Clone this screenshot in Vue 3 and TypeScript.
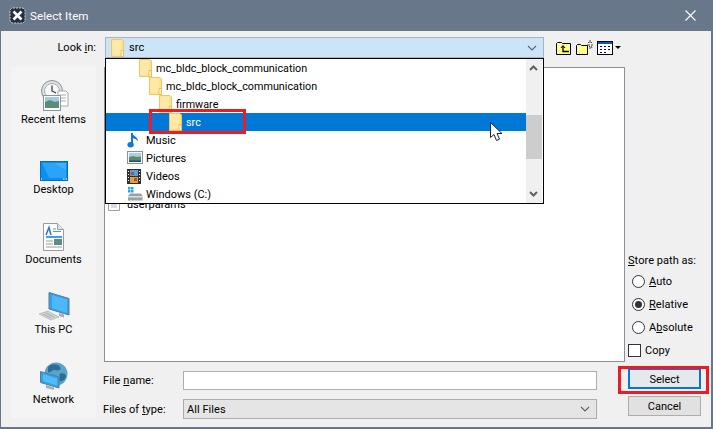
<script setup lang="ts">
interface Row { label: string; indent: number; kind: string; selected?: boolean }
const rows: Row[] = [
  { label: 'mc_bldc_block_communication', indent: 33, kind: 'folder' },
  { label: 'mc_bldc_block_communication', indent: 43, kind: 'folder' },
  { label: 'firmware', indent: 53, kind: 'folder' },
  { label: 'src', indent: 63, kind: 'folder', selected: true },
  { label: 'Music', indent: 21, kind: 'music' },
  { label: 'Pictures', indent: 21, kind: 'pictures' },
  { label: 'Videos', indent: 21, kind: 'videos' },
  { label: 'Windows (C:)', indent: 21, kind: 'drive' },
]
</script>

<template>
  <div class="window">
    <svg class="defs" width="0" height="0" aria-hidden="true">
      <symbol id="folder" viewBox="0 0 13 18">
        <path d="M.5.5h10.500l1.500 1.500v15.500H.5z" fill="#ffe38c" stroke="#ecc86a" />
        <path d="M1.500 1.500h8.500v14h-8.500z" fill="#ffe9a6" />
        <path d="M10 11.500h2.500v6H10z" fill="#fff4cc" stroke="#e0b850" stroke-width=".8" />
      </symbol>
    </svg>

    <header class="titlebar">
      <svg class="logo" width="17" height="17" viewBox="0 0 17 17">
        <rect x="1" y="1" width="15" height="15" rx="3" fill="#26303c" stroke="#c8ced6" stroke-dasharray="2 1" />
        <path d="M4.500 4.500l8 8m0-8l-8 8" stroke="#fff" stroke-width="2.600" />
      </svg>
      <span class="title">Select Item</span>
      <svg class="close" width="11" height="11" viewBox="0 0 11 11">
        <path d="M.5.500l10 10m0-10l-10 10" stroke="#fff" stroke-width="1.100" />
      </svg>
    </header>

    <div class="content">
      <div class="toprow">
        <label class="lookin">Look <u>i</u>n:</label>
        <div class="combo">
          <svg class="ficon" width="13" height="18"><use href="#folder" /></svg>
          <span class="combo-text">src</span>
          <svg class="chev" width="10" height="6" viewBox="0 0 10 6"><path d="M1 1l4 4 4-4" fill="none" stroke="#5a6572" stroke-width="1.100" /></svg>

          <div class="dropdown">
            <div class="dd-list">
              <div v-for="(r, i) in rows" :key="i" class="dd-row" :class="{ selected: r.selected }" :style="{ paddingLeft: r.indent + 'px' }">
                <svg v-if="r.kind === 'folder'" class="ficon" width="13" height="18"><use href="#folder" /></svg>
                <span v-else class="slot">
                  <svg v-if="r.kind === 'music'" width="14" height="16" viewBox="0 0 14 16">
                    <path d="M5 1v11.500" stroke="#0f78d4" stroke-width="2" />
                    <ellipse cx="3.600" cy="12.800" rx="3.200" ry="2.700" fill="#0f78d4" />
                    <path d="M5 1c1 3 6 3.500 6 8.500-1.500-2.500-3.500-3-6-3.500z" fill="#0f78d4" />
                  </svg>
                  <svg v-else-if="r.kind === 'pictures'" width="16" height="14" viewBox="0 0 16 14">
                    <rect x=".5" y=".5" width="15" height="12" fill="#f4f6f7" stroke="#8b9399" />
                    <rect x="2" y="2" width="12" height="4.500" fill="#a9d0e4" />
                    <path d="M2 6l4-1 4 1 4-.5V11H2z" fill="#5f8a6e" />
                    <path d="M2 9.500h12V11H2z" fill="#2f4f55" />
                  </svg>
                  <svg v-else-if="r.kind === 'videos'" width="14" height="15" viewBox="0 0 14 15">
                    <rect x="0" y="0" width="14" height="15" fill="#2c2f33" />
                    <rect x="3" y="1" width="8" height="6" fill="#5aa0d8" />
                    <rect x="3" y="8" width="8" height="6" fill="#d9a53c" />
                    <path d="M4 3h3v3H4zM7 9h3v3H7z" fill="#b34a3a" />
                    <path d="M1 2h1v1H1zm0 3h1v1H1zm0 3h1v1H1zm0 3h1v1H1zm11-9h1v1h-1zm0 3h1v1h-1zm0 3h1v1h-1zm0 3h1v1h-1z" fill="#fff" />
                  </svg>
                  <svg v-else width="16" height="15" viewBox="0 0 16 15">
                    <path d="M1 0h2.500v2.500H1zM4 0h2.500v2.500H4zM1 3h2.500v2.500H1zM4 3h2.500v2.500H4z" fill="#1ea7f0" />
                    <path d="M1 9l2-2.500h11L15.500 9v4.500H1z" fill="#9aa0a6" />
                    <path d="M1 9h14.500v1.500H1z" fill="#dcdfe1" />
                    <rect x="12" y="11.500" width="2" height="1.200" fill="#57d05a" />
                  </svg>
                </span>
                <span class="dd-label" :class="{ near: r.kind !== 'folder' }">{{ r.label }}</span>
              </div>
            </div>
            <div class="dd-scroll">
              <svg width="9" height="6" viewBox="0 0 9 6" class="sa-up"><path d="M1 5l3.500-3.500L8 5" fill="none" stroke="#606060" stroke-width="2" /></svg>
              <div class="dd-thumb"></div>
              <svg width="9" height="6" viewBox="0 0 9 6" class="sa-down"><path d="M1 1l3.500 3.500L8 1" fill="none" stroke="#606060" stroke-width="2" /></svg>
            </div>
          </div>
        </div>

        <div class="tools">
          <svg width="16" height="14" viewBox="0 0 16 14">
            <path d="M.5 13.500V2.500l1-1h4l1 1h8v11z" fill="#ffff8c" stroke="#000" />
            <path d="M5 7l2-2.500L9 7" fill="none" stroke="#000" />
            <path d="M7 5v5.500h6" fill="none" stroke="#000" stroke-width="1.300" />
          </svg>
          <svg width="17" height="15" viewBox="0 0 17 15">
            <path d="M.5 14.500V5.500l1-1h3l1 1h6v9z" fill="#ffff8c" stroke="#000" />
            <path d="M14 0v3M12 2l1 1M16 2l-1 1M11 5h3M15 5h2M13 7l1-1M16 8l-1-2M14 7v2" stroke="#222" stroke-width=".8" />
          </svg>
          <svg width="16" height="14" viewBox="0 0 16 14">
            <rect x=".5" y=".5" width="15" height="13" fill="#fff" stroke="#000" />
            <rect x="1" y="1" width="14" height="2" fill="#0a5bb0" />
            <path d="M3 5h2v1H3zM7 5h2v1H7zM11 5h2v1h-2zM3 8h2v1H3zM7 8h2v1H7zM11 8h2v1h-2zM3 11h2v1H3zM7 11h2v1H7z" fill="#000088" />
          </svg>
          <svg class="caret" width="6" height="3" viewBox="0 0 6 3"><path d="M0 0h6L3 3z" fill="#000" /></svg>
        </div>
      </div>

      <div class="main">
        <aside class="sidebar">
          <div class="place">
            <svg width="30" height="31" viewBox="0 0 30 31">
              <circle cx="13" cy="11" r="10.500" fill="#dfe2e4" stroke="#8c9094" />
              <circle cx="13" cy="11" r="7.500" fill="#f6f7f7" stroke="#a8acb0" />
              <path d="M13 5.500V11l4 2" fill="none" stroke="#33383c" stroke-width="1.200" />
              <path d="M19 11h8l2 2v13h-10z" fill="#fff" stroke="#a6a8ab" />
              <path d="M21 15h6M21 18h6M21 21h6" stroke="#a8acb0" />
              <rect x="4.500" y="15.500" width="17" height="15" fill="#fff" stroke="#8f9498" />
              <rect x="6" y="17" width="14" height="6" fill="#9fcbe6" />
              <path d="M6 22l5-2 5 2 4-1v7H6z" fill="#5d8c76" />
            </svg>
            <span>Recent Items</span>
          </div>
          <div class="place">
            <svg width="28" height="20" viewBox="0 0 28 20">
              <rect x=".5" y=".5" width="27" height="19" fill="#0a8ef0" stroke="#0a6cb8" />
              <path d="M2 2h24v15H9z" fill="#2aa4f8" />
              <path d="M14 2h12v7z" fill="#3fb2fb" />
              <path d="M1 18h1M23 18h1.500M25.500 18H27" stroke="#fff" />
            </svg>
            <span>Desktop</span>
          </div>
          <div class="place">
            <svg width="21" height="28" viewBox="0 0 21 28">
              <path d="M.5.5h14l6 6v21H.5z" fill="#fff" stroke="#9a9c9e" />
              <path d="M14.500.5v6h6" fill="#e4e5e6" stroke="#9a9c9e" />
              <path d="M3 12L6 4.500 8 12" fill="none" stroke="#2f6fd0" stroke-width="1.500" />
              <path d="M10 6h3M10 8.500h8M3 13.500h16M3 14.500h16" stroke="#37a3df" />
              <path d="M3 18h7M3 21h7M3 24h16" stroke="#9a9c9e" />
              <rect x="11" y="16" width="8" height="6" fill="#5e8a8c" />
            </svg>
            <span>Documents</span>
          </div>
          <div class="place">
            <svg width="32" height="29" viewBox="0 0 32 29">
              <path d="M11 .5L31 6.500V23L11 17z" fill="#2aa4f0" stroke="#62798e" />
              <path d="M14 3l15 4.500V21L14 16z" fill="#4db8f8" />
              <path d="M21 21l5 1.500v3l-5-1.500z" fill="#a8acb0" />
              <path d="M1 22l9-3 11 6-8 3z" fill="#ced0d2" stroke="#a8acb0" stroke-width=".6" />
              <path d="M5 22l8 4M8 21l8 4" stroke="#8e9194" stroke-width=".5" />
            </svg>
            <span>This PC</span>
          </div>
          <div class="place">
            <svg width="28" height="29" viewBox="0 0 28 29">
              <circle cx="16" cy="12" r="11.500" fill="#5ba3c8" />
              <path d="M8 5c4-4 10-3 12 0s-2 4-5 3-4 4-7 2zM19 12c4-2 7 0 7 2s-4 7-6 5 1-5-1-7z" fill="#2a6f99" />
              <path d="M.5 9.500L19 15v11L.5 20.500z" fill="#2aa4f0" stroke="#62798e" />
              <path d="M3 12l14 4.500v7L3 19z" fill="#52bcf8" />
              <path d="M6 23l8 2.500v2.500l-8-2z" fill="#a8acb0" />
            </svg>
            <span>Network</span>
          </div>
        </aside>

        <div class="center">
          <div class="filelist">
            <div class="file">
              <svg width="12" height="14" viewBox="0 0 12 14"><path d="M.5.500h8l3 3v10H.5z" fill="#fff" stroke="#a0a0a0" /><path d="M3 6h6M3 8h6M3 10h6" stroke="#b8b8b8" /></svg>
              <span>userparams</span>
            </div>
          </div>
          <div class="formrow fr1">
            <label>File <u>n</u>ame:</label>
            <div class="input"></div>
          </div>
          <div class="formrow fr2">
            <label>Files of <u>t</u>ype:</label>
            <div class="select">
              <span>All Files</span>
              <svg width="10" height="6" viewBox="0 0 10 6"><path d="M1 1l4 4 4-4" fill="none" stroke="#606060" stroke-width="1.100" /></svg>
            </div>
          </div>
        </div>

        <div class="right">
          <div class="store-label"><u>S</u>tore path as:</div>
          <div class="radio"><i class="circle"></i><span><u>A</u>uto</span></div>
          <div class="radio"><i class="circle on"></i><span><u>R</u>elative</span></div>
          <div class="radio"><i class="circle"></i><span>A<u>b</u>solute</span></div>
          <div class="check"><i class="box"></i><span>Copy</span></div>
          <button class="btn primary">Select</button>
          <button class="btn">Cancel</button>
        </div>
      </div>
    </div>

    <div class="mark mark-src"></div>
    <div class="mark mark-select"></div>
    <svg class="cursor" width="13" height="20" viewBox="0 0 13 20">
      <path d="M.5.500v15l3.500-3 2.500 6 3-1.300-2.500-5.700h5z" fill="#fff" stroke="#1c2430" stroke-width="1" />
    </svg>
  </div>
</template>

<style scoped>
.window {
  position: relative;
  width: 713px;
  height: 429px;
  box-sizing: border-box;
  border: 1px solid #68778a;
  border-width: 0 2px 2px 1px;
  background: #f0f0f0;
  font-family: Roboto, "Noto Sans", sans-serif;
  font-size: 11px;
  letter-spacing: 0.05px;
  color: #000;
  overflow: hidden;
}
.defs { position: absolute; }
.titlebar {
  display: flex;
  align-items: center;
  height: 31px;
  background: #68778a;
  padding: 0 15px 0 8px;
  box-sizing: border-box;
  color: #fff;
}
.title { margin-left: 4px; font-size: 11.600px; color: #fff; }
.close { margin-left: auto; }
.content { padding: 6px 0 0 0; }
.toprow { display: flex; align-items: center; height: 21px; }
.lookin { width: 95px; text-align: right; }
.combo {
  position: relative;
  display: flex;
  align-items: center;
  box-sizing: border-box;
  width: 439px;
  height: 21px;
  margin-left: 9px;
  background: #cce4f7;
  border: 1px solid #a6b4c0;
  padding: 0 6px 0 5px;
}
.combo-text { margin-left: 5px; }
.chev { margin-left: auto; }
.ficon { flex: none; }
.dropdown {
  position: absolute;
  z-index: 2;
  left: -1px;
  top: 20px;
  width: 439px;
  height: 146px;
  box-sizing: border-box;
  background: #fff;
  border: 1px solid #000;
  display: flex;
}
.dd-list { flex: 1; }
.dd-row {
  display: flex;
  align-items: center;
  height: 18px;
  box-sizing: border-box;
  width: 420px;
}
.dd-row.selected { background: #0078d7; color: #fff; }
.dd-label { margin-left: 4px; white-space: nowrap; font-size: 10.800px; letter-spacing: 0; }
.dd-label.near { margin-left: 0; font-size: 11px; }
.slot { width: 19px; flex: none; display: flex; align-items: center; }
.dd-scroll {
  position: relative;
  width: 16px;
  background: #f0f0f0;
  margin-right: 1px;
}
.dd-thumb {
  position: absolute;
  left: 0;
  right: 0;
  top: 56px;
  height: 44px;
  background: #cdcdcd;
}
.sa-up { position: absolute; left: 3px; top: 6px; }
.sa-down { position: absolute; left: 3px; bottom: 6px; }
.tools { display: flex; align-items: center; gap: 4px; margin-left: 12px; }
.caret { margin-left: -2px; }
.main { display: flex; margin-top: 9px; height: 360px; }
.sidebar {
  width: 85px;
  height: 351px;
  margin-left: 10px;
  background: #f4f4f4;
  padding-top: 8px;
  box-sizing: border-box;
}
.place {
  height: 70px;
  display: flex;
  flex-direction: column;
  align-items: center;
  justify-content: flex-end;
  gap: 2px;
  padding-bottom: 19px;
  box-sizing: border-box;
}
.center { width: 521px; margin-left: 8px; display: flex; flex-direction: column; }
.filelist {
  height: 295px;
  box-sizing: border-box;
  background: #fff;
  border: 1px solid #8a9099;
  padding: 128px 0 0 3px;
}
.file { display: flex; align-items: center; gap: 7px; height: 16px; }
.formrow { display: flex; align-items: center; }
.formrow label { width: 79px; margin-left: -1px; margin-right: 1px; }
.fr1 { margin-top: 9px; }
.fr2 { margin-top: 9px; }
.input {
  width: 414px;
  height: 19px;
  box-sizing: border-box;
  background: #fff;
  border: 1px solid #adadad;
}
.select {
  width: 414px;
  height: 20px;
  box-sizing: border-box;
  background: #e5e5e5;
  border: 1px solid #adadad;
  display: flex;
  align-items: center;
  justify-content: space-between;
  padding: 0 6px 0 3px;
}
.right {
  width: 73px;
  margin-left: 3px;
  display: flex;
  flex-direction: column;
  padding-top: 186px;
  box-sizing: border-box;
}
.store-label { height: 17px; line-height: 16px; white-space: nowrap; }
.radio { display: flex; align-items: center; height: 23px; margin-left: 4px; }
.radio span { margin-left: 4px; }
.circle {
  width: 13px;
  height: 13px;
  box-sizing: border-box;
  border: 1px solid #333;
  border-radius: 50%;
  background: #fff;
  display: block;
  position: relative;
}
.circle.on::after {
  content: "";
  position: absolute;
  left: 2px;
  top: 2px;
  width: 7px;
  height: 7px;
  border-radius: 50%;
  background: #333;
}
.check { display: flex; align-items: center; height: 18px; margin-top: 2px; }
.box {
  width: 13px;
  height: 13px;
  box-sizing: border-box;
  border: 1px solid #333;
  background: #fff;
  display: block;
}
.check span { margin-left: 4px; }
.btn {
  width: 73px;
  height: 20px;
  padding: 0;
  box-sizing: border-box;
  background: #e1e1e1;
  border: 1px solid #adadad;
  font: inherit;
  color: inherit;
  margin-top: 7px;
}
.btn.primary {
  height: 21px;
  margin-top: 9px;
  padding-top: 1px;
  border: 1px solid #0078d7;
  box-shadow: inset 0 0 0 1px #0078d7;
  background: #e5e9ec;
}
.mark {
  position: absolute;
  z-index: 3;
  box-sizing: border-box;
  border: 3px solid #ed1c24;
  pointer-events: none;
}
.mark-src { left: 148px; top: 109px; width: 97px; height: 25px; }
.mark-select { left: 617px; top: 366px; width: 91px; height: 28px; }
.cursor { position: absolute; z-index: 4; left: 489px; top: 122px; }
u { text-underline-offset: 1px; }
</style>

<style>
html, body { margin: 0; background: #f0f0f0; }
</style>
